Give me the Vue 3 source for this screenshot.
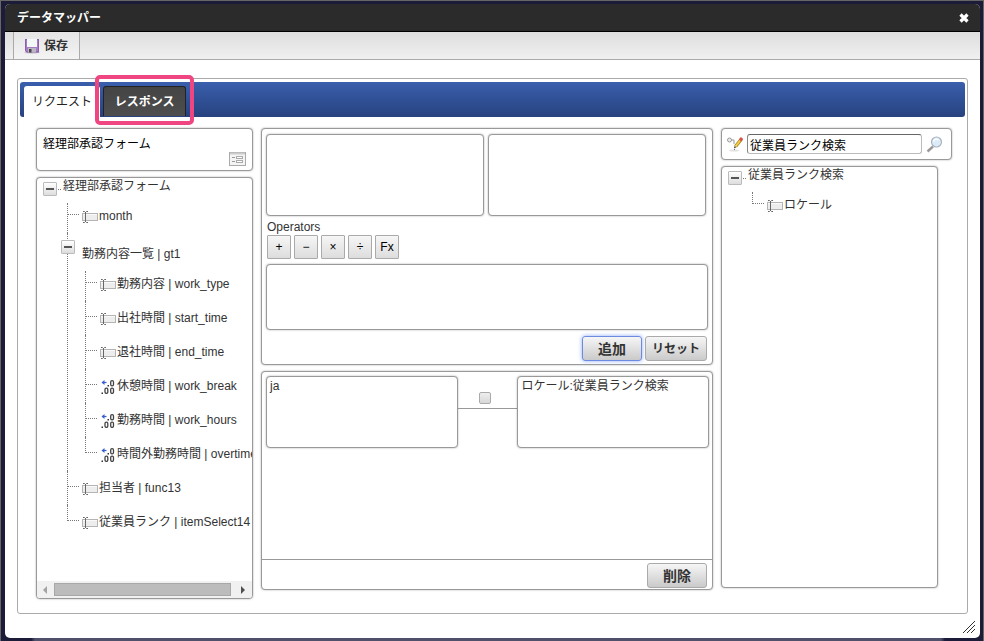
<script setup>
import { ref, h } from 'vue'

const activeTab = ref('request')
const serviceName = ref('従業員ランク検索')
const mappingChecked = ref(false)

const operators = ['+', '−', '×', '÷', 'Fx']

const sourceTree = {
  label: '経理部承認フォーム',
  children: [
    { label: 'month', icon: 'text' },
    {
      label: '勤務内容一覧 | gt1',
      children: [
        { label: '勤務内容 | work_type', icon: 'text' },
        { label: '出社時間 | start_time', icon: 'text' },
        { label: '退社時間 | end_time', icon: 'text' },
        { label: '休憩時間 | work_break', icon: 'number' },
        { label: '勤務時間 | work_hours', icon: 'number' },
        { label: '時間外勤務時間 | overtime', icon: 'number' },
      ],
    },
    { label: '担当者 | func13', icon: 'text' },
    { label: '従業員ランク | itemSelect14', icon: 'text' },
  ],
}

const targetTree = {
  label: '従業員ランク検索',
  children: [{ label: 'ロケール', icon: 'text' }],
}

const FieldIcon = (props) =>
  props.kind === 'number'
    ? h('svg', { width: 16, height: 16, viewBox: '0 0 16 16', 'aria-hidden': 'true' }, [
        h('path', { d: 'M2 4.500h4.500', stroke: '#3a5fcd', fill: 'none', 'stroke-width': 1.2 }),
        h('path', { d: 'M1.500 4.500L4.500 2v5z', fill: '#3a5fcd' }),
        h('path', { d: 'M7.500 7H9v1.500H7.500zM1.500 14.500H3V16H1.500z', fill: '#333' }),
        h('rect', { x: 10.7, y: 2.7, width: 2.8, height: 5.2, rx: 1.3, fill: 'none', stroke: '#444', 'stroke-width': 1.3 }),
        h('rect', { x: 5, y: 10.2, width: 2.8, height: 5.2, rx: 1.3, fill: 'none', stroke: '#444', 'stroke-width': 1.3 }),
        h('rect', { x: 10.7, y: 10.2, width: 2.8, height: 5.2, rx: 1.3, fill: 'none', stroke: '#444', 'stroke-width': 1.3 }),
      ])
    : h('svg', { width: 16, height: 16, viewBox: '0 0 16 16', 'aria-hidden': 'true' }, [
        h('rect', { x: 0.5, y: 5.5, width: 15, height: 7, fill: '#ededed', stroke: '#b4b4b4' }),
        h('path', { d: 'M1 6.5h14', stroke: '#fafafa', fill: 'none' }),
        h('path', { d: 'M1 3.5h1.500l1 1 1-1H6M3.5 4v10M1 14.5h1.500l1-1 1 1H6', stroke: '#666', fill: 'none' }),
      ])
FieldIcon.props = ['kind']
</script>

<template>
  <div class="page">
    <section class="dialog" role="dialog" aria-labelledby="dialog-title">
      <header class="titlebar">
        <h1 id="dialog-title">データマッパー</h1>
        <button class="close" type="button" aria-label="閉じる">
          <svg width="12" height="12" viewBox="0 0 12 12"><path d="M2.500 2.500l7 7M9.500 2.500l-7 7" stroke="#fff" stroke-width="3.200" /></svg>
        </button>
      </header>

      <div class="toolbar">
        <button class="save" type="button">
          <svg width="16" height="16" viewBox="0 0 16 16" aria-hidden="true">
            <ellipse cx="8" cy="14.500" rx="8" ry="1.200" fill="#ccc" />
            <path d="M1 1h14v13.500H2.500L1 13z" fill="#a67cc4" />
            <path d="M1.500 1.500h13V14H3l-1.500-1.500z" fill="none" stroke="#8a5fac" />
            <path d="M3 1h10v8H3z" fill="#f2f7f8" />
            <path d="M4 10h8v4.500H4z" fill="#bcb5c2" />
            <path d="M5 11h2.500v3.500H5z" fill="#4a4650" />
          </svg>
          <span>保存</span>
        </button>
      </div>

      <main class="body">
        <div class="panel">
          <nav class="tabs" role="tablist">
            <button type="button" role="tab" class="tab" :class="{ active: activeTab === 'request' }" :aria-selected="activeTab === 'request'" @click="activeTab = 'request'">リクエスト</button>
            <button type="button" role="tab" class="tab marked" :class="{ active: activeTab === 'response' }" :aria-selected="activeTab === 'response'" @click="activeTab = 'response'">レスポンス</button>
          </nav>

          <div class="columns">
            <div class="column">
              <div class="card form-card">
                <span>{{ sourceTree.label }}</span>
                <svg width="17" height="14" viewBox="0 0 17 14" aria-hidden="true">
                  <rect x=".5" y=".5" width="16" height="13" fill="#f4f4f4" stroke="#aaa" />
                  <path d="M1 1.500h15" stroke="#ccc" stroke-width="2" />
                  <path d="M3 5.500h3M3 9.500h3" stroke="#999" />
                  <rect x="7.500" y="4.500" width="6" height="2" fill="#fff" stroke="#aaa" />
                  <rect x="7.500" y="8.500" width="6" height="2" fill="#fff" stroke="#aaa" />
                </svg>
              </div>
              <div class="card tree-card">
                <div class="tree">
                  <div class="root">
                    <button class="toggle" type="button" aria-label="折りたたむ"></button>
                    <i class="stub"></i>
                    <span>{{ sourceTree.label }}</span>
                  </div>
                  <ul>
                    <li v-for="node in sourceTree.children" :key="node.label">
                      <i class="rail"></i>
                      <div v-if="node.children" class="group">
                        <button class="toggle" type="button" aria-label="折りたたむ"></button>
                        <span class="group-label">{{ node.label }}</span>
                        <ul>
                          <li v-for="leaf in node.children" :key="leaf.label">
                            <i class="rail"></i>
                            <div class="leaf"><FieldIcon :kind="leaf.icon" /><span>{{ leaf.label }}</span></div>
                          </li>
                        </ul>
                      </div>
                      <div v-else class="leaf"><FieldIcon :kind="node.icon" /><span>{{ node.label }}</span></div>
                    </li>
                  </ul>
                </div>
                <div class="scrollbar" aria-hidden="true">
                  <svg width="17" height="16" viewBox="0 0 17 16"><path d="M10 4v8L6 8z" fill="#a3a3a3" /></svg>
                  <i class="thumb"></i>
                  <svg width="21" height="16" viewBox="0 0 21 16"><path d="M10 4v8l4-4z" fill="#505050" /></svg>
                </div>
              </div>
            </div>

            <div class="column">
              <section class="card builder">
                <div class="operands">
                  <div class="card"></div>
                  <div class="card"></div>
                </div>
                <div class="op-label">Operators</div>
                <div class="operators">
                  <button v-for="op in operators" :key="op" type="button">{{ op }}</button>
                </div>
                <div class="card formula"></div>
                <div class="actions">
                  <button class="btn focused" type="button">追加</button>
                  <button class="btn reset" type="button">リセット</button>
                </div>
              </section>

              <section class="card mappings">
                <div class="mapping">
                  <div class="card">ja</div>
                  <label class="link">
                    <input v-model="mappingChecked" type="checkbox" aria-label="マッピングを選択" />
                  </label>
                  <div class="card">ロケール:従業員ランク検索</div>
                </div>
                <div class="actions footer">
                  <button class="btn" type="button">削除</button>
                </div>
              </section>
            </div>

            <div class="column">
              <div class="card search">
                <svg width="16" height="16" viewBox="0 0 16 16" aria-hidden="true">
                  <ellipse cx="7" cy="14.500" rx="5" ry="1" fill="#e2e2e2" />
                  <circle cx="2.500" cy="4" r="2" fill="#eee" stroke="#999" />
                  <path d="M4.500 4H7v4" fill="none" stroke="#999" />
                  <path d="M7.500 11v4" stroke="#777" stroke-dasharray="1 1" />
                  <path d="M8.500 10.500L14.500 3" stroke="#a58024" stroke-width="3.400" />
                  <path d="M8.500 10.500L13.500 4" stroke="#f2cf45" stroke-width="2" />
                  <path d="M13 4.500l2-2.500" stroke="#d9534a" stroke-width="3" />
                  <path d="M7 12.500l.6-2.500 1.600 1.200z" fill="#444" />
                </svg>
                <input v-model="serviceName" type="text" aria-label="サービス名" />
                <button type="button" aria-label="検索">
                  <svg width="17" height="17" viewBox="0 0 17 17">
                    <path d="M1.500 15.500l5.500-5" stroke="#999" stroke-width="2.400" />
                    <circle cx="10.500" cy="6" r="5" fill="#dcebf8" stroke="#a9b4c2" stroke-width="1.200" />
                    <path d="M7.500 5.500a3 3 0 0 1 5-1.500" stroke="#fff" stroke-width="1.500" fill="none" />
                  </svg>
                </button>
              </div>
              <div class="card tree-card target">
                <div class="tree">
                  <div class="root">
                    <button class="toggle" type="button" aria-label="折りたたむ"></button>
                    <i class="stub"></i>
                    <span>{{ targetTree.label }}</span>
                  </div>
                  <ul>
                    <li v-for="node in targetTree.children" :key="node.label">
                      <i class="rail"></i>
                      <div class="leaf"><FieldIcon :kind="node.icon" /><span>{{ node.label }}</span></div>
                    </li>
                  </ul>
                </div>
              </div>
            </div>
          </div>
        </div>
        <svg class="grip" width="12" height="12" viewBox="0 0 12 12" aria-hidden="true">
          <path d="M0 12L12 0M4 12l8-8M8 12l4-4" stroke="#333" />
        </svg>
      </main>
    </section>
  </div>
</template>

<style>
body {
  margin: 0;
}
</style>

<style scoped>
* {
  box-sizing: border-box;
}
.page {
  min-height: 100vh;
  display: flex;
  padding: 3px 3px 3px 4px;
  background: linear-gradient(90deg, #1c1c38 30px, #50506a 34px, #50506a calc(100% - 42px), #1c1c38 calc(100% - 38px)) bottom / 100% 3px no-repeat, #1c1c38;
  border: 1px solid #666;
  border-bottom: 0;
  font: 12px/16px "Liberation Sans", "Noto Sans CJK JP", sans-serif;
  color: #333;
}
button,
input {
  font: inherit;
  color: inherit;
  margin: 0;
}
button {
  padding: 0;
}
svg {
  display: block;
  flex: none;
}
.dialog {
  flex: 1;
  min-width: 0;
  display: flex;
  flex-direction: column;
  background: #fff;
  border-radius: 5px;
  overflow: hidden;
}
.titlebar {
  display: flex;
  align-items: center;
  justify-content: space-between;
  height: 28px;
  padding: 0 10px 0 12px;
  background: #2b2b2b;
  border-bottom: 1px solid #000;
  color: #fff;
}
.titlebar h1 {
  margin: 0;
  font-size: 12px;
  line-height: 16px;
}
.close {
  border: 0;
  background: none;
}
.toolbar {
  display: flex;
  height: 28px;
  padding-left: 8px;
  background: linear-gradient(#dedede, #f0f0f0);
  border-bottom: 1px solid #aaa;
}
.save {
  display: flex;
  align-items: center;
  gap: 4px;
  padding: 0 11px 0 10px;
  border: solid #aaa;
  border-width: 0 1px;
  background: linear-gradient(#e4e4e4, #f4f4f4);
  font-weight: bold;
}
.body {
  flex: 1;
  position: relative;
  padding: 18px 12px 24px;
}
.panel {
  height: 100%;
  padding: 3px 2px;
  border: 1px solid #aaa;
  border-radius: 3px;
}
.tabs {
  display: flex;
  gap: 3px;
  height: 35px;
  padding: 4px 4px 0;
  border-radius: 3px;
  background: linear-gradient(#3a5fad, #27427f);
}
.tab {
  position: relative;
  min-width: 76px;
  padding: 0 8px;
  border: 0;
  background: linear-gradient(#444, #4e4e4e);
  border-radius: 3px 3px 0 0;
  color: #fff;
  font-weight: bold;
  height: 30px;
}
.tab.marked {
  border: 1px solid #222;
  border-bottom: 0;
  min-width: 83px;
}
.tab.active {
  height: 31px;
  background: #fff;
  color: #222;
  font-weight: normal;
}
.tab.marked::after {
  content: "";
  position: absolute;
  inset: -12px -9px -9px;
  border: 4px solid #ef4580;
  border-radius: 5px;
}
.columns {
  display: grid;
  grid-template-columns: minmax(0, 217fr) minmax(0, 452fr) minmax(0, 231fr);
  gap: 8px;
  padding: 11px 13px 0 16px;
}
.column {
  display: flex;
  flex-direction: column;
  gap: 6px;
}
.card {
  border: 1px solid #999;
  border-radius: 4px;
  background: #fff;
  box-shadow: 0 0 2px rgba(0, 0, 0, 0.35);
}
.form-card {
  display: flex;
  justify-content: space-between;
  min-height: 43px;
  padding: 7px 6px 4px;
  color: #000;
}
.form-card svg {
  align-self: flex-end;
}
.tree-card {
  display: flex;
  flex-direction: column;
  min-height: 422px;
  overflow: hidden;
}
.target {
  margin-right: 14px;
}
.tree {
  flex: 1;
  padding-left: 6px;
  white-space: nowrap;
}
.tree ul {
  list-style: none;
  margin: 0;
  padding: 0;
}
.root {
  display: flex;
  align-items: flex-start;
  height: 21px;
}
.toggle {
  flex: none;
  display: grid;
  place-items: center;
  width: 14px;
  height: 14px;
  border: 1px solid #bbb;
  border-radius: 1px;
  background: linear-gradient(#fff, #ddd);
}
.toggle::before {
  content: "";
  width: 8px;
  height: 2px;
  background: #555;
}
.root .toggle {
  margin-top: 4px;
}
.stub {
  width: 3px;
  margin: 11px 2px 0 1px;
  border-top: 1px dotted #777;
}
.tree > ul {
  padding-left: 24px;
}
.tree li {
  display: flex;
}
.rail {
  flex: none;
  width: 15px;
  border-left: 1px dotted #777;
}
.rail::before {
  content: "";
  display: block;
  width: 11px;
  height: 15px;
  border-bottom: 1px dotted #777;
}
.rail:has(+ .group)::before {
  border-bottom-color: transparent;
}
li:first-child > .rail {
  margin-top: 4px;
}
li:first-child > .rail::before {
  height: 11px;
}
li:last-child > .rail {
  align-self: flex-start;
}
.leaf {
  display: flex;
  align-items: center;
  gap: 1px;
  height: 34px;
}
.group {
  position: relative;
}
.group .toggle {
  position: absolute;
  left: -21px;
  top: 7px;
}
.group-label {
  display: block;
  height: 34px;
  padding: 13px 0 0;
}
.group ul {
  padding-left: 3px;
}
.scrollbar {
  display: flex;
  align-items: center;
  height: 17px;
  background: #f1f1f1;
}
.thumb {
  flex: 1;
  height: 13px;
  background: #bcbcbc;
  border: 1px solid #a8a8a8;
}
.builder {
  min-height: 237px;
  padding: 5px 4px 3px;
}
.operands {
  display: grid;
  grid-template-columns: 1fr 1fr;
  gap: 4px;
  padding-right: 2px;
}
.operands .card {
  min-height: 82px;
}
.op-label {
  padding: 3px 1px 0;
}
.operators {
  display: flex;
  gap: 3px;
  padding: 0 1px 5px;
}
.operators button {
  width: 24px;
  height: 24px;
  border: 1px solid #aaa;
  border-radius: 1px;
  background: linear-gradient(#f6f6f6, #ddd);
  color: #000;
}
.formula {
  min-height: 66px;
}
.actions {
  display: flex;
  justify-content: flex-end;
  gap: 3px;
  padding: 6px 1px 0;
}
.btn {
  min-width: 60px;
  height: 25px;
  border: 1px solid #aaa;
  border-radius: 3px;
  background: linear-gradient(#f6f6f6, #cacaca);
  font-weight: bold;
  font-size: 14px;
}
.btn.reset {
  min-width: 62px;
  font-size: 12px;
}
.btn.focused {
  border-color: #6c8be0;
  box-shadow: 0 0 4px #8fabf5;
}
.mappings {
  display: flex;
  flex-direction: column;
  min-height: 219px;
}
.mapping {
  flex: 1;
  display: grid;
  grid-template-columns: 192fr 60fr 192fr;
  align-items: start;
  padding: 4px 3px 0 4px;
}
.mapping .card {
  min-height: 72px;
  padding: 1px 3px;
}
.link {
  display: flex;
  justify-content: center;
  align-items: flex-start;
  height: 33px;
  padding: 16px 4px 0 0;
  border-bottom: 1px solid #999;
}
.link input {
  appearance: none;
  width: 12px;
  height: 12px;
  border: 1px solid #aaa;
  border-radius: 2px;
  background: linear-gradient(#eee, #d8d8d8);
}
.footer {
  border-top: 1px solid #999;
  padding: 3px 5px 1px;
}
.search {
  display: flex;
  align-items: center;
  gap: 4px;
  min-height: 32px;
  padding: 0 8px 0 5px;
}
.search input {
  flex: 1;
  min-width: 0;
  height: 20px;
  padding: 0 2px;
  border: 1px solid #bbb;
  border-top-color: #666;
  border-left-color: #888;
  border-radius: 3px;
  color: #000;
}
.search button {
  border: 0;
  background: none;
}
.grip {
  position: absolute;
  right: 5px;
  bottom: 5px;
}
</style>
